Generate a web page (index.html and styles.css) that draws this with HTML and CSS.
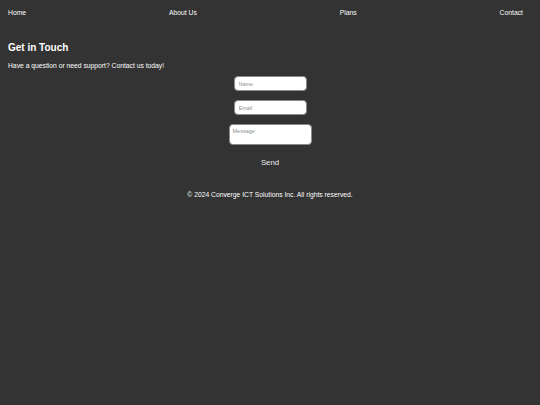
FILE: index.html
```html
<!DOCTYPE html>
<html lang="en">
<head>
<meta charset="utf-8">
<title>Contact</title>
<link rel="stylesheet" href="styles.css">
</head>
<body>
<nav class="nav">
  <a href="#">Home</a>
  <a href="#">About Us</a>
  <a href="#">Plans</a>
  <a href="#">Contact</a>
</nav>
<section class="contact">
  <h1>Get in Touch</h1>
  <p>Have a question or need support? Contact us today!</p>
  <form class="form">
    <input type="text" placeholder="Name">
    <input type="email" placeholder="Email">
    <textarea placeholder="Message"></textarea>
    <button type="button">Send</button>
  </form>
</section>
<footer class="footer">© 2024 Converge ICT Solutions Inc. All rights reserved.</footer>
</body>
</html>
```

FILE: styles.css
```css
html, body {
  margin: 0;
  padding: 0;
  background: #333333;
  color: #ffffff;
  font-family: "Liberation Sans", Arial, sans-serif;
}
.nav {
  display: flex;
  justify-content: space-between;
  padding: 8px 17px 0 8px;
  height: 14px;
  font-size: 6.8px;
  line-height: 10px;
}
.nav a {
  color: #ffffff;
  text-decoration: none;
}
.contact {
  padding: 0 8px;
}
.contact h1 {
  margin: 19px 0 0;
  font-size: 10px;
  line-height: 14px;
  font-weight: bold;
}
.contact p {
  margin: 6px 0 0;
  font-size: 6.75px;
  line-height: 9px;
}
.form {
  display: flex;
  flex-direction: column;
  align-items: center;
  margin-top: 6px;
}
.form input,
.form textarea {
  box-sizing: border-box;
  background: #ffffff;
  border: 1px solid #8a8a8a;
  border-radius: 4px;
  font-family: "Liberation Sans", Arial, sans-serif;
  font-size: 5.5px;
  color: #222;
  outline: none;
}
.form input {
  width: 73px;
  height: 15px;
  padding: 0 4px;
  margin-bottom: 9px;
}
.form textarea {
  width: 83px;
  height: 21px;
  padding: 3px 3px;
  resize: none;
}
.form ::placeholder {
  color: #8f8f8f;
}
.form button {
  margin-top: 13px;
  background: none;
  border: none;
  color: #eeeeee;
  font-family: "Liberation Sans", Arial, sans-serif;
  font-size: 7.8px;
  line-height: 10px;
  padding: 0;
}
.footer {
  text-align: center;
  font-size: 6.75px;
  line-height: 10px;
  margin-top: 22px;
  color: #ffffff;
}
```
